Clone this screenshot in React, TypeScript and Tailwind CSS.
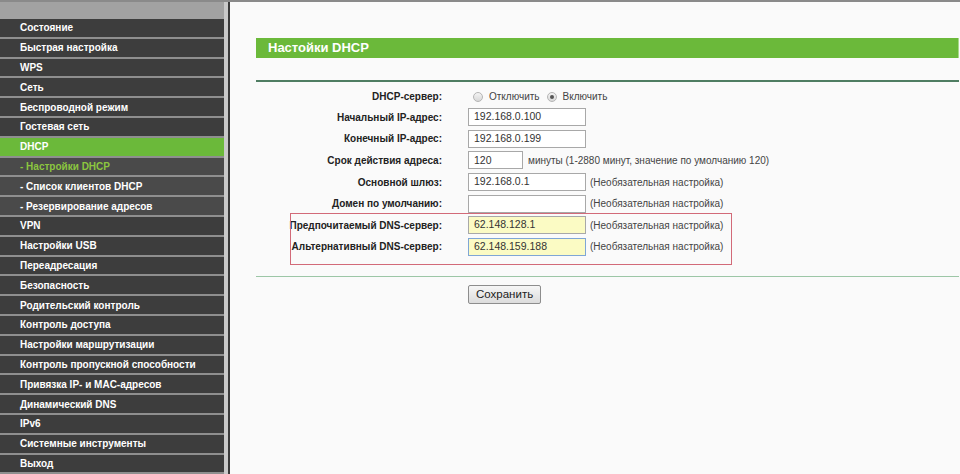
import React from 'react'

const menu: { label: string; sub?: boolean; active?: boolean; current?: boolean }[] = [
  { label: 'Состояние' },
  { label: 'Быстрая настройка' },
  { label: 'WPS' },
  { label: 'Сеть' },
  { label: 'Беспроводной режим' },
  { label: 'Гостевая сеть' },
  { label: 'DHCP', active: true },
  { label: '- Настройки DHCP', sub: true, current: true },
  { label: '- Список клиентов DHCP', sub: true },
  { label: '- Резервирование адресов', sub: true },
  { label: 'VPN' },
  { label: 'Настройки USB' },
  { label: 'Переадресация' },
  { label: 'Безопасность' },
  { label: 'Родительский контроль' },
  { label: 'Контроль доступа' },
  { label: 'Настройки маршрутизации' },
  { label: 'Контроль пропускной способности' },
  { label: 'Привязка IP- и MAC-адресов' },
  { label: 'Динамический DNS' },
  { label: 'IPv6' },
  { label: 'Системные инструменты' },
  { label: 'Выход' },
]

function Sidebar() {
  return (
    <div className="flex w-[230px] shrink-0">
      <div className="w-[224px] bg-[#8f8f8f]">
        <div className="h-[17px] bg-[#a2a2a2]" />
        {menu.map((item) => (
          <div
            key={item.label}
            className={`h-[17.8px] mb-[2px] pl-[20px] flex items-center text-[10px] font-bold whitespace-nowrap ${
              item.active ? 'bg-[#6bb93a] text-white' : item.sub ? 'bg-[#4a4a4a]' : 'bg-[#3d3d3d] text-white'
            } ${item.current ? 'text-[#8cc63f]' : item.sub ? 'text-white' : ''}`}
          >
            {item.label}
          </div>
        ))}
      </div>
      <div className="w-[4px] bg-[#c9c9c9]" />
      <div className="w-[2px] bg-[#3a3a3a]" />
    </div>
  )
}

function Field({ value, w = 'w-[118px]', yellow, focus }: { value: string; w?: string; yellow?: boolean; focus?: boolean }) {
  return (
    <div
      className={`${w} h-[18px] flex items-center pl-[5px] text-[10.5px] text-[#333] border ${
        focus ? 'border-[#7fa6d6]' : 'border-[#a8a8a8]'
      } ${yellow ? 'bg-[#fbfbc4]' : 'bg-white'}`}
    >
      {value}
    </div>
  )
}

function Row({ label, children }: { label: string; children: React.ReactNode }) {
  return (
    <div className="h-[21.6px] flex items-center">
      <div className="w-[186px] text-right text-[10px] font-bold text-[#222] whitespace-nowrap">{label}</div>
      <div className="ml-[26px] flex items-center gap-[4px] text-[10px] text-[#444] whitespace-nowrap">{children}</div>
    </div>
  )
}

function Radio({ checked }: { checked?: boolean }) {
  return (
    <span className="w-[10px] h-[10px] rounded-full border border-[#b5b5b5] bg-gradient-to-b from-[#f4f4f4] to-[#d8d8d8] flex items-center justify-center">
      {checked && <span className="w-[4px] h-[4px] rounded-full bg-[#555]" />}
    </span>
  )
}

export default function App() {
  const optional = '(Необязательная настройка)'
  return (
    <div className="w-[960px] h-[474px] overflow-hidden flex border-t-2 border-[#8a8a8a] font-['Liberation_Sans',Arial,sans-serif]">
      <Sidebar />
      <div className="flex-1 bg-[#fafafa] pl-[26px] pr-[1px]">
        <div className="mt-[36px] h-[20px] bg-[#6bb93a] border-r border-[#a8d88a] flex items-center pl-[12px] text-[13px] font-bold text-white">
          Настойки DHCP
        </div>
        <div className="mt-[22px] h-[1.5px] bg-[#4f7d62]" />
        <div className="relative pt-[5px]">
          <div className="h-[20px] flex items-center">
            <div className="w-[186px] text-right text-[10px] font-bold text-[#222]">DHCP-сервер:</div>
            <div className="ml-[31px] flex items-center text-[10px] text-[#444]">
              <Radio />
              <span className="ml-[6px]">Отключить</span>
              <span className="ml-[7px]" />
              <Radio checked />
              <span className="ml-[6px]">Включить</span>
            </div>
          </div>
          <Row label="Начальный IP-адрес:">
            <Field value="192.168.0.100" />
          </Row>
          <Row label="Конечный IP-адрес:">
            <Field value="192.168.0.199" />
          </Row>
          <Row label="Срок действия адреса:">
            <Field value="120" w="w-[55px]" />
            <span className="ml-[1px]">минуты (1-2880 минут, значение по умолчанию 120)</span>
          </Row>
          <Row label="Основной шлюз:">
            <Field value="192.168.0.1" />
            <span>{optional}</span>
          </Row>
          <Row label="Домен по умолчанию:">
            <Field value="" />
            <span>{optional}</span>
          </Row>
          <Row label="Предпочитаемый DNS-сервер:">
            <Field value="62.148.128.1" yellow />
            <span>{optional}</span>
          </Row>
          <Row label="Альтернативный DNS-сервер:">
            <Field value="62.148.159.188" yellow focus />
            <span>{optional}</span>
          </Row>
          <div className="absolute left-[34px] top-[131px] w-[442px] h-[52px] border border-[#d26a78]" />
        </div>
        <div className="mt-[18px] h-[1.5px] bg-[#9cc6a6]" />
        <div className="mt-[8px] ml-[212px] flex">
          <button className="h-[19px] px-[7px] border border-[#8d8d8d] rounded-[2px] bg-gradient-to-b from-[#f6f6f6] to-[#dcdcdc] text-[11.5px] text-[#222] leading-none">
            Сохранить
          </button>
        </div>
      </div>
    </div>
  )
}
